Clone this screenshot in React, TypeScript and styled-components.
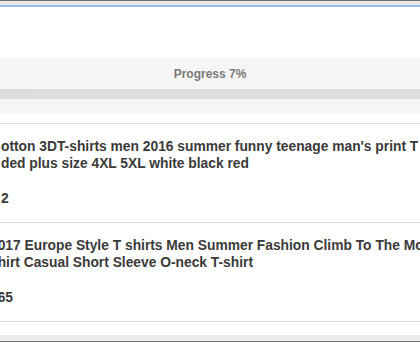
import * as React from "react";
import styled, { createGlobalStyle } from "styled-components";

const GlobalStyle = createGlobalStyle`
  html, body {
    margin: 0;
    padding: 0;
    background: #ffffff;
    overflow: hidden;
  }
  body {
    font-family: "Liberation Sans", Arial, sans-serif;
  }
`;

interface Product {
  lines: string[];
  price: string;
  offset: number;
}

const products: Product[] = [
  {
    lines: [
      "otton 3DT-shirts men 2016 summer funny teenage man's print T",
      "ded plus size 4XL 5XL white black red",
    ],
    price: "2",
    offset: 1,
  },
  {
    lines: [
      "2017 Europe Style T shirts Men Summer Fashion Climb To The Moon",
      "shirt Casual Short Sleeve O-neck T-shirt",
    ],
    price: "165",
    offset: -10,
  },
];

export default function App() {
  const progress = 7;

  return (
    <Page>
      <GlobalStyle />
      <WindowTop />
      <FocusLine />
      <Blank />
      <ProgressPanel>
        <ProgressLabel>Progress {progress}%</ProgressLabel>
        <Track>
          <Fill style={{ width: `${progress}%` }} />
        </Track>
        <PanelFoot />
      </ProgressPanel>
      <Spacer />
      <List>
        {products.map((p, i) => (
          <Item key={i}>
            <ItemBody offset={p.offset}>
              {p.lines.map((l, j) => (
                <Title key={j}>{l}</Title>
              ))}
              <Price>{p.price}</Price>
            </ItemBody>
          </Item>
        ))}
      </List>
      <BottomGap />
      <WindowBottom />
    </Page>
  );
}

const Page = styled.div`
  width: 420px;
  height: 342px;
  display: flex;
  flex-direction: column;
  overflow: hidden;
`;

const WindowTop = styled.div`
  height: 4px;
  border-top: 1px solid #707070;
  background: #e9e9e9;
  flex-shrink: 0;
`;

const FocusLine = styled.div`
  height: 2px;
  background: #93bff0;
  flex-shrink: 0;
`;

const Blank = styled.div`
  height: 51px;
  flex-shrink: 0;
`;

const ProgressPanel = styled.div`
  background: #f5f5f5;
  display: flex;
  flex-direction: column;
  flex-shrink: 0;
`;

const ProgressLabel = styled.div`
  height: 31px;
  display: flex;
  align-items: center;
  justify-content: center;
  font-size: 12px;
  font-weight: 700;
  color: #7a7a7a;
`;

const Track = styled.div`
  height: 10px;
  background: #dedede;
`;

const Fill = styled.div`
  height: 100%;
  background: #dcdcdc;
`;

const PanelFoot = styled.div`
  height: 14px;
`;

const Spacer = styled.div`
  height: 10px;
  flex-shrink: 0;
`;

const List = styled.div`
  border-top: 1px solid #dcdcdc;
  flex-shrink: 0;
`;

const Item = styled.div`
  border-bottom: 1px solid #dcdcdc;
  padding: 14px 0 15px;
  overflow: hidden;
`;

const ItemBody = styled.div<{ offset: number }>`
  margin-left: ${(p) => p.offset}px;
  color: #3a3a3a;
  font-size: 13.8px;
  font-weight: 700;
  line-height: 17px;
`;

const Title = styled.div`
  white-space: nowrap;
`;

const Price = styled.div`
  margin-top: 18px;
  white-space: nowrap;
`;

const BottomGap = styled.div`
  flex: 1;
`;

const WindowBottom = styled.div`
  height: 6px;
  background: #ececec;
  border-bottom: 1px solid #6e6e6e;
  flex-shrink: 0;
`;
